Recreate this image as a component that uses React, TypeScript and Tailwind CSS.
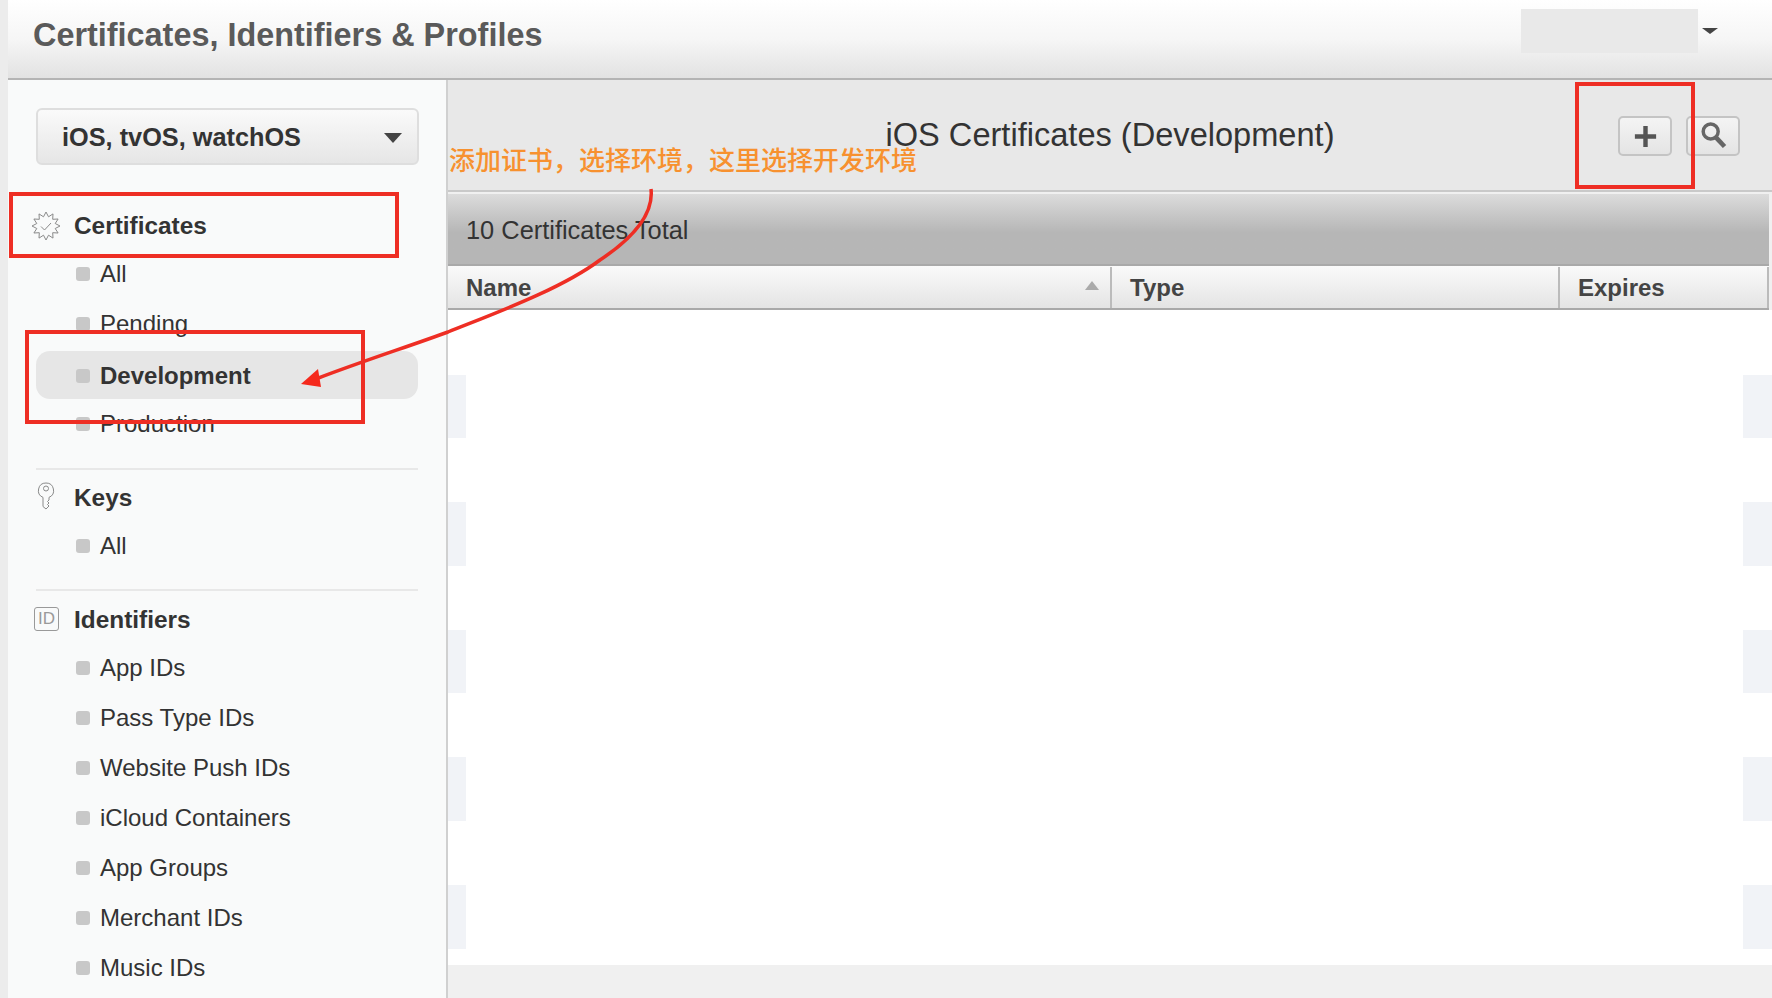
const stripes = [false, true, false, true, false, true, false, true, false, true, false];

// twelve pointed seal around the check mark
const sealPoints = Array.from({ length: 24 }, (_, i) => {
    const r = i % 2 === 0 ? 14 : 9.5;
    const a = (i * Math.PI) / 12 - Math.PI / 2;
    return `${(14 + r * Math.cos(a)).toFixed(1)},${(14 + r * Math.sin(a)).toFixed(1)}`;
}).join(' ');

function BadgeIcon() {
    return (
        <svg width="28" height="28" viewBox="0 0 28 28" fill="none" stroke="#8a8a8a" strokeWidth="1" className="-ml-[4px] shrink-0">
            <polygon points={sealPoints} strokeLinejoin="round" />
            <path d="M9 14.5l3.5 3.5L19 11" />
        </svg>
    );
}

function KeyIcon() {
    return (
        <svg width="18" height="28" viewBox="0 0 18 28" fill="none" stroke="#8a8a8a" strokeWidth="1" className="-mt-[4px] ml-[1px] shrink-0">
            <path d="M9 1a7.5 7.5 0 0 1 3 14.4V18l-1.5 1.5L12 21l-1.5 1.5L12 24l-3 3-3-2.5V15.4A7.5 7.5 0 0 1 9 1z" />
            <circle cx="9" cy="6.5" r="2.5" />
        </svg>
    );
}

function SearchIcon() {
    return (
        <svg width="30" height="30" viewBox="0 0 26 26" fill="none" stroke="#666" className="-mt-[3px]">
            <circle cx="11" cy="10" r="6.5" strokeWidth="3" />
            <path d="M15.5 15L23 23" strokeWidth="4" />
        </svg>
    );
}

function SubItem({ label, active }: { label: string; active?: boolean }) {
    return (
        <div className={`flex items-center ${active ? 'mt-[2px] h-[48px] rounded-[14px] bg-[#e6e6e6] pt-px font-bold' : 'h-[50px]'}`}>
            <span className="ml-[40px] mr-[10px] h-[14px] w-[14px] rounded-[3px] bg-[#c8c8c8]" />
            <span className="text-[24px] text-[#333]">{label}</span>
        </div>
    );
}

function Heading({ icon, label }: { icon: React.ReactNode; label: string }) {
    return (
        <div className="flex h-[46px] items-center">
            <span className="flex w-[38px] justify-start">{icon}</span>
            <span className="text-[24.4px] font-bold text-[#333]">{label}</span>
        </div>
    );
}

function Divider() {
    return <div className="h-[2px] bg-[#e8e8e8]" />;
}

function Sidebar() {
    return (
        <aside className="w-[440px] shrink-0 border-r-2 border-[#d0d0d0] bg-[#f9fafa] pl-[28px] pr-[28px] pt-[28px]">
            <div className="-mr-px flex h-[57px] items-center justify-between rounded-[6px] border-2 border-[#dedede] bg-gradient-to-b from-[#fafafa] to-[#e6e6e6] pl-[24px] pr-[15px] pt-[3px]">
                <span className="text-[25.3px] font-bold text-[#333]">iOS, tvOS, watchOS</span>
                <span className="h-0 w-0 border-x-[9px] border-t-[10px] border-x-transparent border-t-[#444]" />
            </div>
            <div className="mt-[38px]">
                <Heading icon={<BadgeIcon />} label="Certificates" />
                <SubItem label="All" />
                <SubItem label="Pending" />
                <SubItem label="Development" active />
                <SubItem label="Production" />
            </div>
            <div className="mt-[19px]"><Divider /></div>
            <div className="mt-[5px]">
                <Heading icon={<KeyIcon />} label="Keys" />
                <SubItem label="All" />
            </div>
            <div className="mt-[18px]"><Divider /></div>
            <div className="mt-[6px]">
                <Heading
                    icon={
                        <span className="-ml-[2px] -mt-[2px] flex h-[24px] w-[25px] items-center justify-center rounded-[3px] border border-[#999] text-[17px] font-light text-[#999]">ID</span>
                    }
                    label="Identifiers"
                />
                {['App IDs', 'Pass Type IDs', 'Website Push IDs', 'iCloud Containers', 'App Groups', 'Merchant IDs', 'Music IDs'].map(item => (
                    <SubItem key={item} label={item} />
                ))}
            </div>
        </aside>
    );
}

function Main() {
    return (
        <main className="flex min-w-0 flex-1 flex-col bg-[#f0f0f0]">
            <div className="relative flex h-[112px] shrink-0 items-center justify-center border-b-2 border-[#c9c9c9] bg-[#e8e8e8]">
                <h2 className="text-[32.6px] text-[#333]">iOS Certificates (Development)</h2>
                <div className="absolute right-[32px] top-[36px] flex gap-[14px]">
                    <button className="flex h-[40px] w-[54px] items-center justify-center rounded-[5px] border-2 border-[#c4c4c4] bg-gradient-to-b from-[#f4f4f4] to-[#e4e4e4]">
                        <svg width="23" height="23" viewBox="0 0 26 26" stroke="#555" strokeWidth="5">
                            <path d="M13 1v24M1 13h24" />
                        </svg>
                    </button>
                    <button className="flex h-[40px] w-[54px] items-center justify-center rounded-[5px] border-2 border-[#c4c4c4] bg-gradient-to-b from-[#f4f4f4] to-[#e4e4e4]">
                        <SearchIcon />
                    </button>
                </div>
            </div>
            <div className="mr-[3px] flex h-[74px] shrink-0 items-center border-b-2 border-t-2 border-b-[#a9a9a9] border-t-[#f0f0f0] bg-gradient-to-b from-[#dcdcdc] via-[#b6b6b6] via-55% to-[#b6b6b6] pl-[18px] pt-[2px]">
                <span className="text-[25.4px] text-[#333]">10 Certificates Total</span>
            </div>
            <div className="mr-[3px] flex h-[44px] shrink-0 border-b-2 border-[#a9a9a9] bg-gradient-to-b from-[#fafafa] to-[#e4e4e4] pt-px text-[24px] font-bold text-[#444]">
                <div className="relative flex w-[662px] items-center pl-[18px]">
                    Name
                    <span className="absolute right-[11px] top-[14px] h-0 w-0 border-x-[7px] border-b-[9px] border-x-transparent border-b-[#aaa]" />
                </div>
                <div className="flex w-[448px] items-center border-l-2 border-[#bbb] pl-[18px]">Type</div>
                <div className="flex flex-1 items-center border-x-2 border-[#bbb] pl-[18px]">Expires</div>
            </div>
            <div className="flex flex-col">
                {[65, 63, 64, 64, 64, 63, 64, 64, 64, 64, 16].map((h, i) => (
                    <div key={i} className={`flex ${h === 65 ? 'h-[65px]' : h === 63 ? 'h-[63px]' : h === 64 ? 'h-[64px]' : 'h-[16px]'}`}>
                        <div className={`w-[18px] ${stripes[i] ? 'bg-[#f1f3f7]' : 'bg-white'}`} />
                        <div className="flex-1 bg-white" />
                        <div className={`w-[29px] ${stripes[i] ? 'bg-[#f1f3f7]' : 'bg-white'}`} />
                    </div>
                ))}
            </div>
        </main>
    );
}

export default function App() {
    return (
        <div className="relative flex h-[998px] w-full overflow-hidden bg-[#ececec] pl-[8px] font-['Liberation_Sans',sans-serif]">
            <div className="flex min-w-0 flex-1 flex-col">
                <header className="flex h-[80px] shrink-0 items-center justify-between border-b-2 border-[#b4b4b4] bg-gradient-to-b from-white via-[#f6f6f6] to-[#e2e2e2] pl-[25px]">
                    <h1 className="mb-[7px] text-[32.4px] font-bold text-[#5a5a5a]">Certificates, Identifiers &amp; Profiles</h1>
                    <div className="mb-[16px] flex items-center">
                        <div className="h-[44px] w-[177px] bg-[#e9e9e9]" />
                        <span className="ml-[4px] mr-[54px] h-0 w-0 border-x-[8px] border-t-[6px] border-x-transparent border-t-[#444]" />
                    </div>
                </header>
                <div className="flex min-h-0 flex-1">
                    <Sidebar />
                    <Main />
                </div>
            </div>

            {/* annotations drawn over the screenshot */}
            <div className="absolute left-[449px] top-[142px] font-['Noto_Sans_CJK_SC',sans-serif] text-[26px] font-medium leading-[34px] text-[#f7912f]">添加证书，选择环境，这里选择开发环境</div>
            <div className="absolute left-[9px] top-[192px] h-[66px] w-[390px] border-[4px] border-[#ee2e24]" />
            <div className="absolute left-[25px] top-[330px] h-[94px] w-[340px] border-[4px] border-[#ee2e24]" />
            <div className="absolute left-[1575px] top-[82px] h-[107px] w-[120px] border-[4px] border-[#ee2e24]" />
            <svg className="pointer-events-none absolute left-0 top-0" width="1772" height="998" viewBox="0 0 1772 998" fill="none">
                <path d="M651 189C654 215 630 240 600 260C560 290 490 315 448 332C410 346 360 362 316 379" stroke="#ee2e24" strokeWidth="3.5" />
                <path d="M301 384L318 369L321 387Z" fill="#f5291c" />
            </svg>
        </div>
    );
}
